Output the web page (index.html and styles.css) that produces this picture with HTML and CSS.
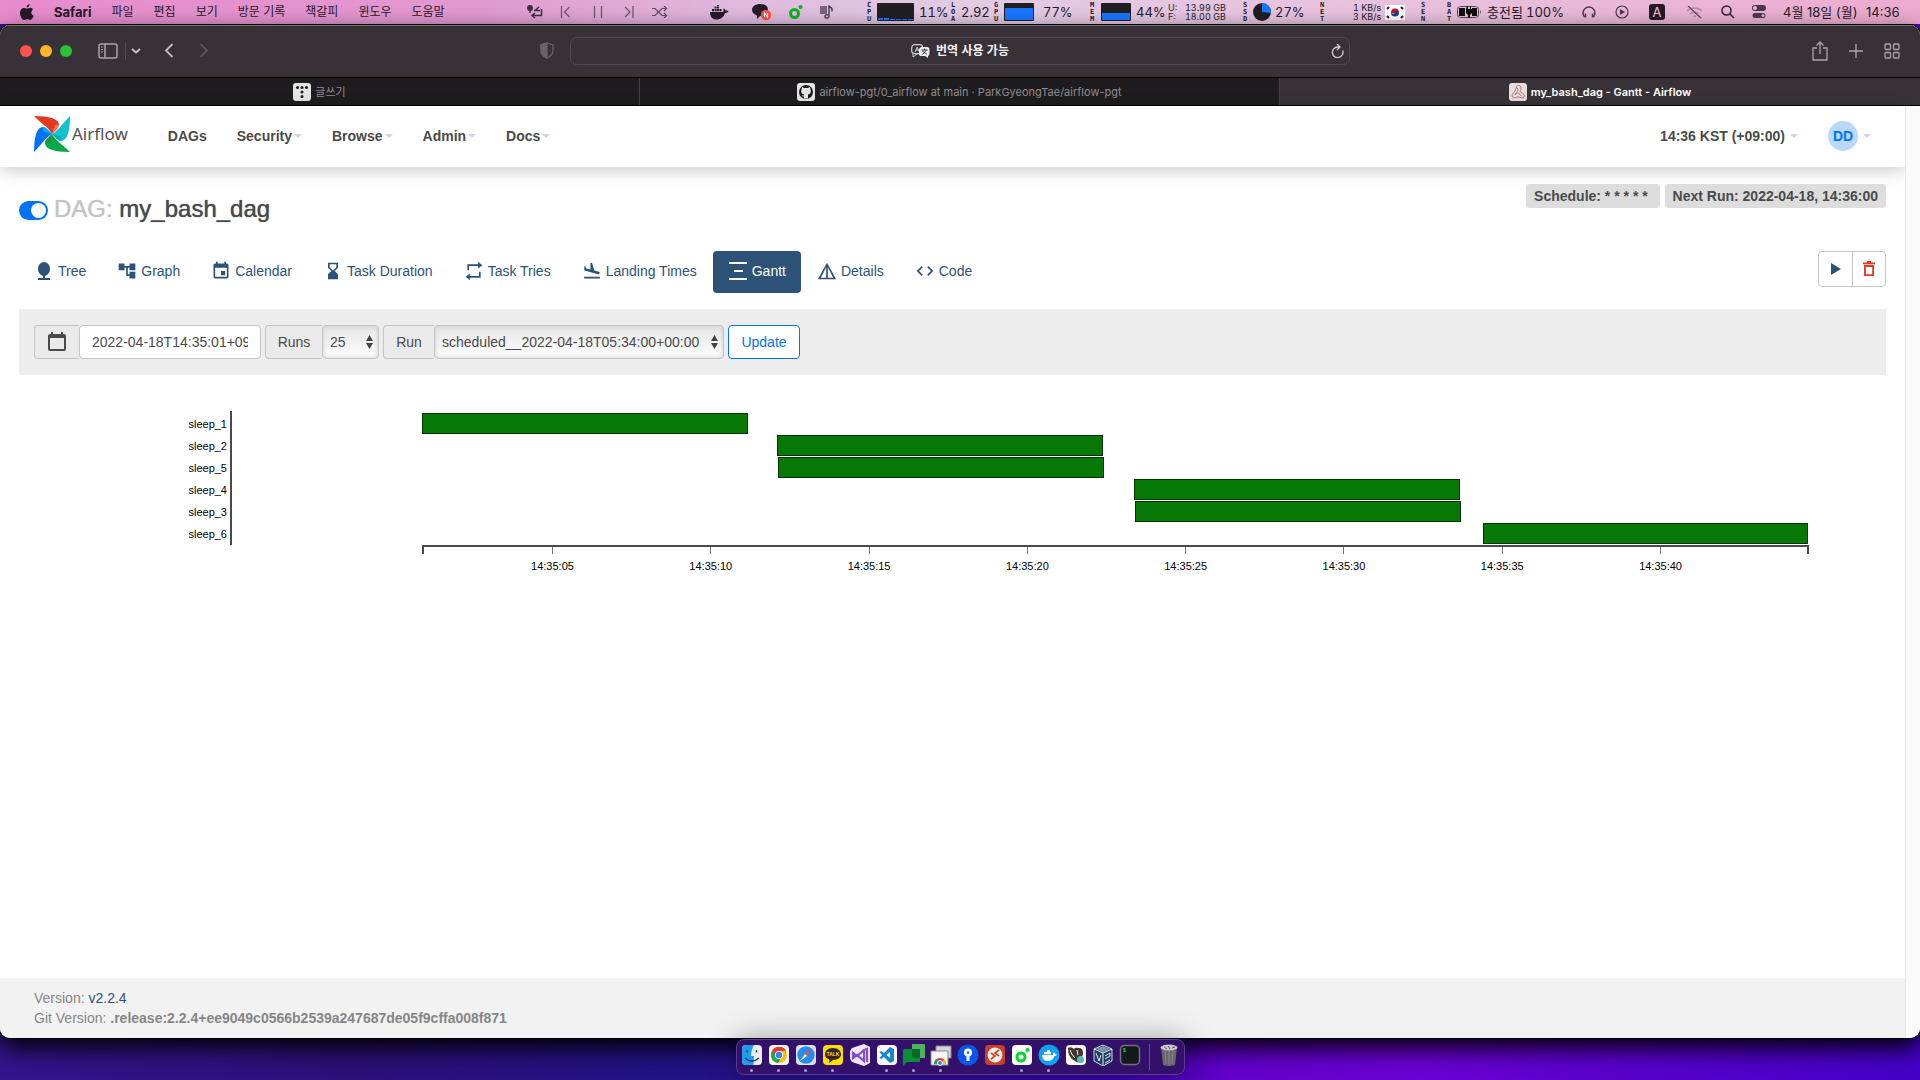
FILE: index.html
```html
<!DOCTYPE html>
<html lang="ko">
<head>
<meta charset="utf-8">
<meta name="viewport" content="width=device-width, initial-scale=1">
<title>my_bash_dag - Gantt - Airflow</title>
<link rel="stylesheet" href="styles.css">
</head>
<body>
<header class="menubar">
  <nav class="app-menu" aria-label="Safari">
    <svg class="apple" width="14" height="17" viewBox="0 0 14 17"><path fill="#241a28" d="M9.6 0c.1 1.900-1.400 3.500-3 3.500C6.400 1.800 8 .200 9.600 0zM7 4.700c.7 0 1.700-.9 3.100-.9 1.200 0 2.300.6 3 1.600-2.700 1.600-2.200 5.300.6 6.300-.6 1.700-2 4.300-3.500 4.300-1.100 0-1.500-.7-2.900-.7s-1.800.7-2.900.7C2.200 16 0 12 0 8.900 0 5.700 2 4 3.900 4c1.300 0 2.300.7 3.100.7z"/></svg>
    <b>Safari</b><span>파일</span><span>편집</span><span>보기</span><span>방문 기록</span><span>책갈피</span><span>윈도우</span><span>도움말</span>
  </nav>
  <div class="status">
    <svg width="16" height="14" viewBox="0 0 16 14" fill="none" stroke="#3b3040" stroke-width="1.500"><circle cx="3" cy="3" r="2.200" fill="#3b3040"/><path d="M3 5v3M5 10.500h9.500V4M12 2l-4 3.500h-1M8 8l-3 2.500L8 13M9 5.500h4"/></svg>
    <svg width="11" height="12" viewBox="0 0 11 12" fill="none" stroke="#6b5a6d" stroke-width="1.300"><path d="M1.500 0v12M9.500 1L4.500 6l5 5"/></svg>
    <svg width="11" height="12" viewBox="0 0 11 12" stroke="#6b5a6d" stroke-width="1.300"><path d="M1.500 0v12M8.500 0v12"/></svg>
    <svg width="11" height="12" viewBox="0 0 11 12" fill="none" stroke="#6b5a6d" stroke-width="1.300"><path d="M9 0v12M1 1l5 5-5 5"/></svg>
    <svg width="16" height="12" viewBox="0 0 16 12" fill="none" stroke="#5d4d60" stroke-width="1.200"><path d="M0 2.500h3l7 7h4M0 9.500h3l7-7h4M12 0l2.500 2.500L12 5M12 7l2.500 2.500L12 12"/></svg>
    <svg width="19" height="15" viewBox="0 0 19 15" fill="#241d29"><path d="M0 7h13c.8-.2.700-2 .2-2.700l.8-.8c.9.500 1.200 1.300 1.300 2 1 0 2.200 0 3.200.5-.5 1.500-2 2-3.500 2-1.200 4-4 6.500-8.500 6.500C2.500 14.500 0 12 0 7z"/><path d="M2 4h2v2.300H2zM4.500 4h2v2.300h-2zM7 4h2v2.300H7zM9.500 4h2v2.300h-2zM4.500 1.500h2v2h-2zM7 1.500h2v2H7zM7 0h2v1H7z"/></svg>
    <svg width="20" height="18" viewBox="0 0 20 18"><path fill="#241d29" d="M8 1c5 0 8 2 8 6.500S13 13 8 13l-3 3v-3.600C2 11.500 0 9.500 0 7 0 3 4 1 8 1z"/><circle cx="14" cy="12" r="5.200" fill="#fb5146"/><path d="M12.500 14v-4l3 4v-4" stroke="#fff" stroke-width="1.200" fill="none"/></svg>
    <svg width="14" height="14" viewBox="0 0 14 14"><circle cx="5.500" cy="8.500" r="4" fill="none" stroke="#06b714" stroke-width="3"/><circle cx="11.500" cy="2" r="2" fill="#06b714"/></svg>
    <svg width="13" height="14" viewBox="0 0 13 14"><path fill="#776577" d="M0 1h7v8H0z"/><path d="M9 12V1l3 2.500v3M9 11.500a2 1.700 0 1 1-1-1.500" stroke="#3b3040" fill="none" stroke-width="1.300"/></svg>
    <span class="vert">C<br>P<br>U</span>
    <svg width="37" height="18" viewBox="0 0 37 18"><rect width="37" height="18" rx="1" fill="#211f22"/><path fill="#1677ff" d="M1 15h5v2H1zM7 15h5v2H7zM13 16h5v1h-5zM19 16h5v1h-5zM25 16h5v1h-5zM31 16h5v1h-5z"/></svg>
    <span class="stat">11%</span>
    <span class="vert">L<br>O<br>A</span>
    <span class="stat">2.92</span>
    <span class="vert">G<br>P<br>U</span>
    <svg width="30" height="18" viewBox="0 0 30 18"><rect width="30" height="18" rx="1" fill="#211f22"/><path fill="#1677ff" d="M1 5h28v12H1z"/></svg>
    <span class="stat">77%</span>
    <span class="vert">M<br>E<br>M</span>
    <svg width="30" height="18" viewBox="0 0 30 18"><rect width="30" height="18" rx="1" fill="#211f22"/><path fill="#1677ff" d="M1 10h28v7H1z"/></svg>
    <span class="stat">44%</span>
    <span class="duo">U:<br>F:</span>
    <span class="duo">13.99 GB<br>18.00 GB</span>
    <span class="vert">S<br>S<br>D</span>
    <svg width="18" height="18" viewBox="0 0 18 18"><circle cx="9" cy="9" r="9" fill="#211f22"/><path fill="#1677ff" d="M9 9V0a9 9 0 0 1 9 10z"/></svg>
    <span class="stat">27%</span>
    <span class="vert">N<br>E<br>T</span>
    <span class="duo">1 KB/s<br>3 KB/s</span>
    <svg width="20" height="15" viewBox="0 0 20 15"><path fill="#fff" d="M0 0h20v15H0z"/><path fill="#c8102e" d="M6 8a4 4 0 0 1 8-1l-4 1z"/><path fill="#17408b" d="M6 7.500a4 4 0 0 0 8 0c-1-2-3-2-4 0s-3 1-4 0z"/><path stroke="#222" stroke-width="2" d="M2 4l2-2M16 2l2 2M2 11l2 2M16 13l2-2"/></svg>
    <span class="vert">S<br>E<br>N</span>
    <span class="vert">B<br>A<br>T</span>
    <svg width="25" height="12" viewBox="0 0 25 12"><rect x=".5" y=".5" width="21" height="11" rx="3" fill="none" stroke="#5b4858"/><path fill="#111" d="M2 2h6v8H2zM15 2h5v8h-5zM9 3l1-3h1v3h2V0h1v3h1v4l-2 2v3h-2V9L9 7z"/><path fill="#6b5a6d" d="M23 4q2 2 0 4z"/></svg>
    <span>충전됨</span><span class="stat">100%</span>
    <svg width="14" height="14" viewBox="0 0 14 14" fill="none" stroke="#4b3a4b" stroke-width="1.500"><path d="M2.500 12A6 6 0 1 1 11.500 12M3.500 8.500v4M10.500 8.500v4"/></svg>
    <svg width="14" height="14" viewBox="0 0 14 14" fill="none" stroke="#4b3a4b" stroke-width="1.200"><circle cx="7" cy="7" r="6"/><path fill="#4b3a4b" d="M5.500 5v4L9 7z"/></svg>
    <span class="input-source">A</span>
    <svg width="17" height="13" viewBox="0 0 17 13" fill="none" stroke="#b48aa5" stroke-width="1.500"><path d="M1 5a11 11 0 0 1 15 0M4 8a7 7 0 0 1 9 0M7 10.500a3 3 0 0 1 3 0"/><path stroke="#5f4a5d" stroke-width="1.200" d="M2 0l13 12"/></svg>
    <svg width="14" height="14" viewBox="0 0 14 14" fill="none" stroke="#2a202c" stroke-width="1.500"><circle cx="5.500" cy="5.500" r="4.500"/><path d="M9 9l4 4"/></svg>
    <svg width="15" height="14" viewBox="0 0 15 14"><rect x="0" y="0" width="14" height="6" rx="3" fill="#4b3a4b"/><circle cx="3" cy="3" r="2" fill="#edb6d4"/><rect x=".5" y="8" width="13" height="5" rx="2.500" fill="#4b3a4b"/><circle cx="11" cy="10.500" r="1.500" fill="#edb6d4"/></svg>
    <span>4월 18일 (월)</span><span>14:36</span>
  </div>
</header>

<main class="window">
  <div class="toolbar">
    <div class="tools-left">
      <span class="lights"><i class="light red"></i><i class="light amber"></i><i class="light green"></i></span>
      <svg width="20" height="16" viewBox="0 0 20 16" fill="none" stroke="#aaa5aa" stroke-width="1.500"><rect x="1" y="1" width="18" height="14" rx="2"/><path d="M7 1v14"/><path stroke-width="1" d="M3 4h2M3 6.500h2M3 9h2"/></svg>
      <span class="divider"></span>
      <svg width="10" height="6" viewBox="0 0 10 6" fill="none" stroke="#c4c0c4" stroke-width="2"><path d="M1 1l4 3.500L9 1"/></svg>
      <svg class="back" width="10" height="15" viewBox="0 0 10 15" fill="none" stroke="#bdb9bd" stroke-width="1.800"><path d="M8.500 1L2 7.500 8.500 14"/></svg>
      <svg class="forward" width="10" height="15" viewBox="0 0 10 15" fill="none" stroke="#625c62" stroke-width="1.600"><path d="M1.500 1L8 7.500 1.500 14"/></svg>
      <svg class="shield" width="14" height="17" viewBox="0 0 14 17" fill="none" stroke="#696369" stroke-width="1.300"><path d="M7 1l6 2v5c0 4-2.500 6.500-6 8-3.500-1.500-6-4-6-8V3z"/><path fill="#696369" d="M7 1L1 3v5c0 4 2.500 6.500 6 8z"/></svg>
    </div>
    <div class="address">
      <svg width="19" height="14" viewBox="0 0 19 14"><rect x=".7" y=".7" width="11" height="9" rx="3" fill="none" stroke="#cfcbcf" stroke-width="1.200"/><path d="M2 9v4l4-3M4 8l2.200-5L8 7.500M5 6h3" stroke="#cfcbcf" fill="none"/><path fill="#eee" d="M10 3h6a2.500 2.500 0 0 1 2.500 2.500v4A2.500 2.500 0 0 1 17 12v2l-3-2h-4a2 2 0 0 1-2-2V5z"/><path d="M10.500 6h6M13.500 4.500V6M11.500 10.500L15.500 6M11.500 7l4.500 3.500" stroke="#3a343a" fill="none"/></svg>
      <b>번역 사용 가능</b>
      <svg class="reload" width="13" height="14" viewBox="0 0 13 14" fill="none" stroke="#d0ccd0" stroke-width="1.300"><path d="M11.700 6.500A5.300 5.300 0 1 1 6.500 3h2M6 0l3 3-3 3"/></svg>
    </div>
    <div class="tools-right">
      <svg width="16" height="20" viewBox="0 0 16 20" fill="none" stroke="#aaa5aa" stroke-width="1.300"><path d="M5 7H1v12h14V7h-4M8 13V1M4.500 4.500L8 1l3.500 3.500"/></svg>
      <svg width="14" height="14" viewBox="0 0 14 14" stroke="#aaa5aa" stroke-width="1.400"><path d="M7 0v14M0 7h14"/></svg>
      <svg width="16" height="16" viewBox="0 0 16 16" fill="none" stroke="#aaa5aa" stroke-width="1.300"><rect x="1" y="1" width="5.500" height="5.500" rx="1"/><rect x="9.500" y="1" width="5.500" height="5.500" rx="1"/><rect x="1" y="9.500" width="5.500" height="5.500" rx="1"/><rect x="9.500" y="9.500" width="5.500" height="5.500" rx="1"/></svg>
    </div>
  </div>
  <div class="tabs">
    <div class="tab"><svg width="18" height="18" viewBox="0 0 18 18"><rect width="18" height="18" rx="3" fill="#e4e4e4"/><g fill="#1c1c1c"><circle cx="4.500" cy="4.500" r="1.500"/><circle cx="9" cy="4.500" r="1.500"/><circle cx="13.500" cy="4.500" r="1.500"/><circle cx="9" cy="9" r="1.500"/><circle cx="9" cy="13.500" r="1.500"/></g></svg>글쓰기</div>
    <div class="tab"><svg width="18" height="18" viewBox="0 0 18 18"><rect width="18" height="18" rx="3" fill="#e4e4e4"/><circle cx="9" cy="9" r="7" fill="#1c1c1c"/><path fill="#e4e4e4" d="M5 4l2 1h4l2-1 .5 2.500c1 3-.5 4.500-2.500 5v4H7v-2c-1.500.3-2-.5-2.500-1.500 1 .3 1.500.8 2.500.5v-1c-2-.5-3.500-2-2.500-5z"/></svg>airflow-pgt/0_airflow at main · ParkGyeongTae/airflow-pgt</div>
    <div class="tab active"><svg width="18" height="18" viewBox="0 0 18 18"><rect width="18" height="18" rx="3" fill="#e4dfdf"/><path d="M3 13c2-5 3-4 4-8s5-3 5 0-2 3 0 4 4 3 3 5-4 0-6 0-5 2-6-1zM6 12c2-4 5-1 6 1M8 5c2 2 0 4-2 6" fill="none" stroke="#c0666a"/></svg>my_bash_dag - Gantt - Airflow</div>
  </div>

  <div class="viewport">
    <div class="page">
      <header class="navbar">
        <a class="brand" href="#"><svg width="36" height="36" viewBox="0 0 36 36">
          <g><path fill="#e43921" d="M0 0C16 0 25 3 25 9L18 18C14 11 9 9 0 0z"/><path fill="#ff7557" d="M21 9q4-1 4 1t-7 8z"/></g>
          <g transform="rotate(90 18 18)"><path fill="#11c1cd" d="M0 0C16 0 25 3 25 9L18 18C14 11 9 9 0 0z"/><path fill="#0da5c0" d="M21 9q4-1 4 1t-7 8z"/></g>
          <g transform="rotate(180 18 18)"><path fill="#04a845" d="M0 0C16 0 25 3 25 9L18 18C14 11 9 9 0 0z"/><path fill="#1a8f3c" d="M21 9q4-1 4 1t-7 8z"/></g>
          <g transform="rotate(270 18 18)"><path fill="#0273f5" d="M0 0C16 0 25 3 25 9L18 18C14 11 9 9 0 0z"/><path fill="#00a8f5" d="M21 9q4-1 4 1t-7 8z"/></g>
        </svg><span>Airflow</span></a>
        <nav class="nav-links"><a href="#">DAGs</a><a class="drop" href="#">Security</a><a class="drop" href="#">Browse</a><a class="drop" href="#">Admin</a><a class="drop" href="#">Docs</a></nav>
        <nav class="nav-user"><a class="drop" href="#">14:36 KST (+09:00)</a><a class="drop" href="#"><span class="avatar">DD</span></a></nav>
      </header>

      <div class="content">
        <div class="heading">
          <input class="toggle" type="checkbox" id="pause" aria-label="Pause/Unpause DAG" checked>
          <h1><label for="pause">DAG:</label> my_bash_dag</h1>
          <div class="badges"><a href="#">Schedule: * * * * *&nbsp;</a><span>Next Run: 2022-04-18, 14:36:00</span></div>
        </div>

        <div class="views">
          <nav class="view-links">
            <a href="#"><svg viewBox="0 0 20 20"><path d="M10 1a6 7 0 0 1 1 13.900V17h5v2H4v-2h5v-2.100A6 7 0 0 1 10 1z"/></svg>Tree</a>
            <a href="#"><svg viewBox="0 0 24 24"><path d="M22 11V3h-7v3H9V3H2v8h7V8h2v10h4v3h7v-8h-7v3h-2V8h2v3z"/></svg>Graph</a>
            <a href="#"><svg viewBox="0 0 24 24"><path d="M17 12h-5v5h5v-5zM16 1v2H8V1H6v2H5c-1.110 0-1.990.9-1.990 2L3 19a2 2 0 0 0 2 2h14c1.100 0 2-.9 2-2V5c0-1.100-.9-2-2-2h-1V1h-2zm3 18H5V8h14v11z"/></svg>Calendar</a>
            <a href="#"><svg viewBox="0 0 24 24"><path d="M6 2v6h.010L6 8.010 10 12l-4 4 .010.010H6V22h12v-5.990h-.010L18 16l-4-4 4-3.990-.010-.010H18V2H6zm2 2h8v3.500l-4 4-4-4z"/></svg>Task Duration</a>
            <a href="#"><svg viewBox="0 0 24 24"><path d="M4 4h13V1l5 4-5 4V6H6v5H4zM20 20H7v3l-5-4 5-4v3h11v-5h2z"/></svg>Task Tries</a>
            <a href="#"><svg viewBox="0 0 24 24"><path d="M2.500 19h19v2h-19zm16.840-3.150c.8.210 1.620-.260 1.840-1.060.210-.8-.260-1.620-1.060-1.840l-5.310-1.420-2.760-9.020L10.120 2v8.280L5.150 8.950l-.930-2.320-1.450-.390v5.170z"/></svg>Landing Times</a>
            <a class="current" href="#"><svg viewBox="0 0 20 20"><path d="M1 1h18v2H1zM6 9h9v2H6zM1 17h18v2H1z"/></svg>Gantt</a>
            <a href="#"><svg viewBox="0 0 24 24"><path d="M12 2L1 22h22zm1 5.500L19.500 20H13zm-2 0V20H4.500z"/></svg>Details</a>
            <a href="#"><svg viewBox="0 0 24 24"><path d="M9.400 16.600L4.800 12l4.600-4.600L8 6l-6 6 6 6zm5.200 0l4.600-4.600-4.600-4.600L16 6l6 6-6 6z"/></svg>Code</a>
          </nav>
          <div class="actions">
            <button type="button" aria-label="Trigger DAG"><svg width="10" height="12" viewBox="0 0 10 12"><path fill="#2c5277" d="M0 0l10 6-10 6z"/></svg></button><button type="button" aria-label="Delete DAG"><svg width="12" height="16" viewBox="0 0 12 16"><path fill="none" stroke="#e43921" stroke-width="1.800" d="M1.900 5v9.100h8.200V5zM0 2.400h12M4 1h4"/></svg></button>
          </div>
        </div>

        <form class="filters">
          <div class="group"><label class="addon cal" for="base" aria-label="Base date"><svg width="18" height="20" viewBox="0 0 18 20"><path fill="#4a4a4a" d="M16 2h-1V0h-2v2H5V0H3v2H2a2 2 0 0 0-2 2v13a2 2 0 0 0 2 2h14a2 2 0 0 0 2-2V4a2 2 0 0 0-2-2zm0 15H2V6h14z"/></svg></label><input id="base" class="date" type="text" value="2022-04-18T14:35:01+09:00"></div>
          <div class="group"><label class="addon runs" for="num">Runs</label><span class="picker"><select id="num" class="num"><option>25</option></select><svg width="7" height="14" viewBox="0 0 7 14"><path fill="#444" d="M0 6l3.500-6L7 6zM0 8h7l-3.500 6z"/></svg></span></div>
          <div class="group"><label class="addon run" for="run">Run</label><span class="picker"><select id="run" class="run-id"><option>scheduled__2022-04-18T05:34:00+00:00</option></select><svg width="7" height="14" viewBox="0 0 7 14"><path fill="#444" d="M0 6l3.500-6L7 6zM0 8h7l-3.500 6z"/></svg></span></div>
          <button class="update" type="submit">Update</button>
        </form>

        <section class="gantt" aria-label="Gantt">
          <ul class="tasks"><li>sleep_1</li><li>sleep_2</li><li>sleep_5</li><li>sleep_4</li><li>sleep_3</li><li>sleep_6</li></ul>
          <div class="plot">
            <div class="rows">
              <div class="row"><div class="bar" style="margin-left:0;width:23.500%"></div></div>
              <div class="row"><div class="bar" style="margin-left:25.620%;width:23.500%"></div></div>
              <div class="row"><div class="bar" style="margin-left:25.700%;width:23.500%"></div></div>
              <div class="row"><div class="bar" style="margin-left:51.340%;width:23.500%"></div></div>
              <div class="row"><div class="bar" style="margin-left:51.420%;width:23.500%"></div></div>
              <div class="row"><div class="bar" style="margin-left:76.460%;width:23.500%"></div></div>
            </div>
            <div class="axis"><span>14:35:05</span><span>14:35:10</span><span>14:35:15</span><span>14:35:20</span><span>14:35:25</span><span>14:35:30</span><span>14:35:35</span><span>14:35:40</span></div>
          </div>
        </section>
      </div>

      <footer class="footer">
        <div>Version: <a href="#">v2.2.4</a></div>
        <div>Git Version: <b>.release:2.2.4+ee9049c0566b2539a247687de05f9cffa008f871</b></div>
      </footer>
    </div>
    <div class="scroll-track"></div>
  </div>
</main>

<div class="dock-area">
  <div class="dock">
    <span class="app on"><svg viewBox="0 0 22 22"><rect x="1" y="1" width="20" height="20" rx="4" fill="#e9eff5"/><path fill="#1f9cf0" d="M5 1h8c-2 3-3 7-3 11h3l-.5 9H5a4 4 0 0 1-4-4V5a4 4 0 0 1 4-4z"/><path d="M6 6v2.500M15.500 6v2.500M4 14c4 4 10 4 14 0" stroke="#173a5c" stroke-width="1.300" fill="none"/></svg></span>
    <span class="app on"><svg viewBox="0 0 22 22"><rect x="1" y="1" width="20" height="20" rx="4" fill="#f7f7f7"/><circle cx="11" cy="11" r="8" fill="#fbbc09"/><path fill="#e33b2e" d="M4 7a8 8 0 0 1 14 0h-7l-3 6z"/><path fill="#23a455" d="M4 7a8 8 0 0 0 6 12l4-7H8z"/><circle cx="11" cy="11" r="4" fill="#fff"/><circle cx="11" cy="11" r="3.200" fill="#3b7ded"/></svg></span>
    <span class="app on"><svg viewBox="0 0 22 22"><rect x="1" y="1" width="20" height="20" rx="4" fill="#dce2ea"/><circle cx="11" cy="11" r="8.700" fill="#2b8ce6"/><path fill="#f04b3c" d="M17 5l-5 7-2-2z"/><path fill="#f4f4f4" d="M5 17l5-7 2 2z"/></svg></span>
    <span class="app on"><svg viewBox="0 0 22 22"><rect x="1" y="1" width="20" height="20" rx="4" fill="#fbdf00"/><path fill="#34241f" d="M11 4c5 0 8 3 8 6.300S16 16 11 16l-4 3 .5-3.500C5 15 3 13 3 10.300 3 7 6 4 11 4z"/><text x="11" y="12" font-size="5" font-weight="700" text-anchor="middle" fill="#fbdf00">TALK</text></svg></span>
    <span class="app"><svg viewBox="0 0 22 22"><path fill="#f1e9fb" d="M15 0l6 3v16l-6 3L3 18 1 15V7l2-3z"/><path d="M15 6l-7 6-4-3v5l4-3 7 6V6l3-1v13" fill="none" stroke="#854cc7" stroke-width="2.200"/></svg></span>
    <span class="app on"><svg viewBox="0 0 22 22"><rect x="1" y="1" width="20" height="20" rx="4" fill="#fafafa"/><path fill="#1684cf" fill-rule="evenodd" d="M14 3l4 2v12l-4 2-6-6-3 2-1.500-1L6 11 3.500 8 5 7l3 2zm0 5l-3.500 3 3.500 3z"/></svg></span>
    <span class="app on"><svg viewBox="0 0 22 22"><path fill="#4eb161" d="M9 0h12q1 0 1 1v13H9z"/><path fill="#0a8e3a" d="M2 5h15v13H4l-4 4V7q0-2 2-2z"/><path fill="#056b28" d="M9 5h8v9h-6q-2 0-2-2z"/></svg></span>
    <span class="app on"><svg viewBox="0 0 22 22"><path fill="#d5d5d5" stroke="#888" d="M6 2h15v12H6z"/><path fill="#f5f5f5" stroke="#888" d="M1 7h17v14H1z"/><path fill="#e33b2e" d="M4 20a6 6 0 0 1 12 0z"/><path fill="#fbbc09" d="M12 20l2-5q2 2 2 5z"/><path fill="#23a455" d="M4 20q0-3 2-5l3 5z"/><circle cx="10" cy="19" r="2.500" fill="#3b7ded" stroke="#fff"/></svg></span>
    <span class="app"><svg viewBox="0 0 22 22"><circle cx="11" cy="11" r="10.500" fill="#0a55ea"/><circle cx="11" cy="8.500" r="4" fill="#fff"/><path fill="#fff" d="M9.500 10h3v7h-3z"/><circle cx="11" cy="8.500" r="1.200" fill="#0a55ea"/></svg></span>
    <span class="app"><svg viewBox="0 0 22 22"><rect x="1" y="1" width="20" height="20" rx="4" fill="#cb3f27"/><circle cx="11" cy="11" r="7.500" fill="#f5f0ee"/><path d="M7 9l4 3-4 3M15 6l-4 3 4 3" fill="none" stroke="#cb3f27" stroke-width="1.600"/></svg></span>
    <span class="app on"><svg viewBox="0 0 22 22"><rect x="1" y="1" width="20" height="20" rx="4" fill="#fafafa"/><circle cx="10" cy="13" r="4" fill="none" stroke="#04d62c" stroke-width="3"/><circle cx="16.500" cy="6" r="2" fill="#04d62c"/></svg></span>
    <span class="app on"><svg viewBox="0 0 22 22"><circle cx="11" cy="11" r="10.500" fill="#0ca0f5"/><path fill="#fff" d="M4 11h11q0-2 1-3 1 1 1 2l2 .5q-.5 1.500-2.500 1.500-1.500 5-7 5-5 0-5.500-6zM6 8h7v2.300H6zM9 6h3v2H9z"/></svg></span>
    <span class="app"><svg viewBox="0 0 22 22"><rect x="1" y="1" width="20" height="20" rx="4" fill="#fafafa"/><path fill="#433630" d="M3 4q3-2 6 1 1-2 5-1 4 0 4 5 0 4-3 4l-1 5q-2 1-4-1Q3 14 3 4z"/><path stroke="#fafafa" d="M5 6q1 4 5 8M12 6l1 5" fill="none"/><circle cx="15.500" cy="15.500" r="3.500" fill="#58b8c0"/></svg></span>
    <span class="app"><svg viewBox="0 0 22 22"><path fill="#1d3f63" stroke="#c9d7e6" d="M11 1l9 4v12l-9 5-9-5V5z"/><path fill="#7d93ab" d="M11 2l7 3-7 3-7-3z"/><path d="M2 5l9 4 9-4M11 9v12M4 9l3 8 2-6M13 12l5-3v3l-5 3M13 19l5-3" stroke="#e7eef6" fill="none"/></svg></span>
    <span class="app"><svg viewBox="0 0 22 22"><rect x="1.500" y="1.500" width="19" height="19" rx="4" fill="#111a1c" stroke="#747080" stroke-width="1.500"/><text x="4" y="8" font-size="5" font-weight="700" fill="#29d643">$</text></svg></span>
    <span class="dock-line"></span>
    <span class="app"><svg viewBox="0 0 22 22"><path fill="#66666b" d="M3 3h16l-2 18q-6 2-12 0z"/><path d="M7 5l1 15M11 5v16M15 5l-1 15" stroke="#88888e"/><ellipse cx="11" cy="3.500" rx="8.500" ry="3" fill="#ccc9cc"/><path d="M6 3l3 2M10 2l2 3M14 4l3-1" stroke="#557"/></svg></span>
  </div>
</div>
</body>
</html>
```
FILE: styles.css
```css
* { box-sizing: border-box; }
body {
  margin: 0;
  min-height: 100vh;
  display: flex;
  flex-direction: column;
  font: 14px/20px "Liberation Sans", "Noto Sans CJK KR", sans-serif;
  color: #4a4a4a;
  background: linear-gradient(90deg, #34148c 0%, #2d1078 18%, #221284 34%, #2a1290 45%, #3a05a8 58%, #6200cc 64%, #6a00d4 74%, #5a00cc 84%, #4400c8 100%);
}
svg { display: block; flex: none; }
a { color: inherit; text-decoration: none; }

.menubar {
  height: 24px;
  display: flex;
  justify-content: space-between;
  padding: 0 19px 0 20px;
  font: 13px/24px Inter, "Noto Sans CJK KR", sans-serif;
  color: #241a28;
  background: linear-gradient(90deg, #e98bcc, #e199d0 25%, #dfbcdf 40%, #e3cbe4 50%, #e8c0dc 75%, #edaace);
  white-space: nowrap;
}
.app-menu { display: flex; align-items: center; gap: 20px; }
.app-menu span { font-size: 12px; }
.status {
  display: grid;
  grid-template-columns: 33px 33px 31px 28px 58px 42px 37px 31px 47px 10px 42px 32px 10px 33px 10px 39px 47px 11px 35px 32px 17px 58px 10px 22px 45px 33px 32px 36px 26px 10px 30px 39px 56px 33px 34px 37px 35px 31px 31px 83px 35px;
  align-items: center;
}
.vert { font: 700 7px/7px "DejaVu Sans Mono", monospace; }
.stat, .duo { font-variant-numeric: tabular-nums; }
.duo { font-size: 9px; line-height: 9px; }
.input-source {
  width: 16px;
  height: 16px;
  border-radius: 3px;
  background: #241a28;
  color: #f1c6dd;
  text-align: center;
  line-height: 16px;
}

.window {
  flex: 1;
  display: flex;
  flex-direction: column;
  margin-top: 1px;
  border-radius: 10px;
  overflow: hidden;
  background: #fff;
  box-shadow: 0 0 0 1px #000, 0 10px 24px #000;
}
.toolbar {
  height: 53px;
  display: grid;
  grid-template-columns: 1fr minmax(300px, 780px) 1fr;
  align-items: center;
  padding-bottom: 2px;
  border-top: 1px solid #746e74;
  border-bottom: 1px solid #000;
  background: #383238;
}
.tools-left { display: flex; align-items: center; padding: 0 16px 0 20px; }
.lights { display: flex; gap: 8px; margin-right: 26px; }
.light { width: 12px; height: 12px; border-radius: 50%; }
.red { background: #ff544d; }
.amber { background: #ffb429; }
.green { background: #25c338; }
.divider { width: 1px; height: 18px; margin: 0 5px 0 7px; background: #514b51; }
.back { margin: 0 25px 0 23px; }
.shield { margin-left: auto; }
.address {
  height: 28px;
  display: grid;
  grid-template-columns: 1fr auto auto 1fr;
  align-items: center;
  column-gap: 6px;
  padding: 0 5px;
  border: 1px solid #504a50;
  border-radius: 7px;
  color: #f3f1f3;
  font-size: 12px;
}
.address svg:first-child { grid-column: 2; }
.reload { justify-self: end; }
.tools-right { display: flex; align-items: center; justify-content: flex-end; gap: 21px; padding-right: 20px; }
.tabs { height: 28px; display: grid; grid-template-columns: repeat(3, 1fr); border-bottom: 1px solid #000; background: #383238; }
.tab {
  display: flex;
  align-items: center;
  justify-content: center;
  gap: 4px;
  border-right: 1px solid #474147;
  background: #1f1c1f;
  color: #8f8b8f;
  font: 11px/16px Inter, "Noto Sans CJK KR", sans-serif;
  white-space: nowrap;
}
.tab.active { border-right: 0; background: #383238; color: #fff; font-weight: 600; }

.viewport { flex: 1; display: flex; }
.page { flex: 1; min-width: 0; display: flex; flex-direction: column; }
.scroll-track { width: 15px; border-left: 1px solid #e7e7e7; background: #fafafa; }

.navbar {
  height: 61px;
  display: flex;
  align-items: center;
  padding: 0 34px 2px;
  box-shadow: 0 4px 16px rgba(0, 0, 0, .2);
  font-weight: 700;
}
.brand { display: flex; align-items: center; gap: 2px; margin: -4px 40px 0 0; font: 17px/20px "Noto Sans", sans-serif; color: #51504f; }
.nav-links { display: flex; gap: 30px; }
.nav-user { display: flex; align-items: center; gap: 30px; margin-left: auto; }
.drop { display: flex; align-items: center; gap: 2px; }
.drop::after { content: ""; border: 4px solid transparent; border-top-color: #dfcfe2; border-bottom: 0; }
.nav-user .drop { gap: 5px; }
.avatar { width: 30px; height: 30px; border-radius: 50%; background: #b8d9fb; color: #0273f5; line-height: 30px; text-align: center; }

.content { flex: 1; padding: 17px 19px 20px; }
.heading { display: flex; align-items: flex-start; height: 67px; }
.toggle {
  appearance: none;
  display: flex;
  justify-content: flex-end;
  width: 29px;
  height: 19px;
  margin: 17px 6px 0 0;
  padding: 2px;
  border-radius: 10px;
  background: #0273f5;
}
.toggle::before { content: ""; width: 15px; height: 15px; border-radius: 50%; background: #fff; }
h1 { flex: 1; margin: 10px 0 0; font-size: 24px; line-height: 30px; font-weight: 500; text-shadow: 0 0 1px currentColor; }
h1 label { color: #c4c4c4; }
.badges { display: flex; gap: 5px; font-weight: 700; line-height: 24px; }
.badges > * { padding: 0 8px; border-radius: 3px; background: #ddd; }

.views { display: flex; justify-content: space-between; }
.view-links { display: flex; gap: 1px; color: #2c5277; }
.view-links a { display: flex; align-items: center; gap: 4px; height: 42px; padding: 0 15px 2px; border-radius: 4px; }
.view-links svg { width: 20px; height: 20px; fill: currentColor; }
.view-links .current { background: #2c5277; color: #fff; }
.actions { display: flex; height: 36px; border: 1px solid #c4c4c4; border-radius: 4px; }
.actions button { width: 33px; padding: 0; display: grid; place-items: center; border: 0; background: none; }
.actions button + button { border-left: 1px solid #c4c4c4; }

.filters { display: flex; gap: 4px; margin-top: 16px; padding: 16px 15px; background: #ededed; }
.group { display: flex; height: 34px; }
.addon {
  display: flex;
  align-items: center;
  justify-content: center;
  border: 1px solid #c4c4c4;
  border-right: 0;
  border-radius: 4px 0 0 4px;
  background: #eaeaea;
}
.cal { width: 45px; }
.runs { width: 57px; }
.run { width: 51px; }
.filters input, .filters select, .update { font: inherit; color: inherit; border: 1px solid #c4c4c4; border-radius: 4px; }
.date { width: 182px; padding: 0 12px; border-top-left-radius: 0; border-bottom-left-radius: 0; background: #fff; }
.picker { display: grid; align-items: center; }
.picker > * { grid-area: 1 / 1; }
.picker svg { justify-self: end; margin-right: 6px; pointer-events: none; }
.filters select { appearance: none; height: 34px; padding: 0 7px; background: linear-gradient(#e6e6e6, #fdfdfd); box-shadow: inset 0 0 5px #ccc; }
.num { width: 57px; }
.run-id { width: 290px; }
.filters .update { width: 72px; height: 34px; padding: 0; border-color: #0273f5; background: #fff; color: #0273f5; }

.gantt { display: flex; padding: 36px 77px 0 0; font-size: 11px; color: #000; }
.tasks { width: 213px; height: 134px; margin: 0; padding: 2px 3px 0 0; list-style: none; text-align: right; line-height: 22px; border-right: 2px solid #4a4a4a; }
.plot { flex: 1; margin-left: 190px; }
.rows { height: 134px; padding-top: 2px; }
.row { height: 22px; }
.bar { height: 21px; border: 1px solid #063006; background: #067806; }
.axis {
  display: flex;
  padding: 0 5% 0 3.7%;
  border-top: 2px solid #4a4a4a;
  background: linear-gradient(#4a4a4a, #4a4a4a) 0 0 / 2px 7px no-repeat, linear-gradient(#4a4a4a, #4a4a4a) 100% 0 / 2px 7px no-repeat;
}
.axis span { flex: 1; padding-top: 9px; text-align: center; background: linear-gradient(#777, #777) 50% 0 / 1px 7px no-repeat; }

.footer { padding: 10px 34px; background: #f2f2f2; color: #868686; }
.footer a { color: #2c5277; }

.dock-area { height: 42px; padding-top: 1px; z-index: 1; display: flex; justify-content: center; align-items: flex-start; }
.dock {
  display: flex;
  gap: 5px;
  height: 36px;
  padding: 4px 4px 0;
  border: 1px solid #5b3b91;
  border-radius: 8px;
  background: #33116b;
  box-shadow: 0 0 30px rgba(0, 0, 0, .35);
}
.app { display: grid; justify-items: center; align-content: start; row-gap: 3px; width: 22px; }
.app svg { width: 22px; height: 22px; }
.app.on::after { content: ""; width: 3px; height: 3px; border-radius: 50%; background: #b296e0; }
.dock-line { width: 1px; height: 26px; margin: 0 3px; background: #6d4ca0; }
```
